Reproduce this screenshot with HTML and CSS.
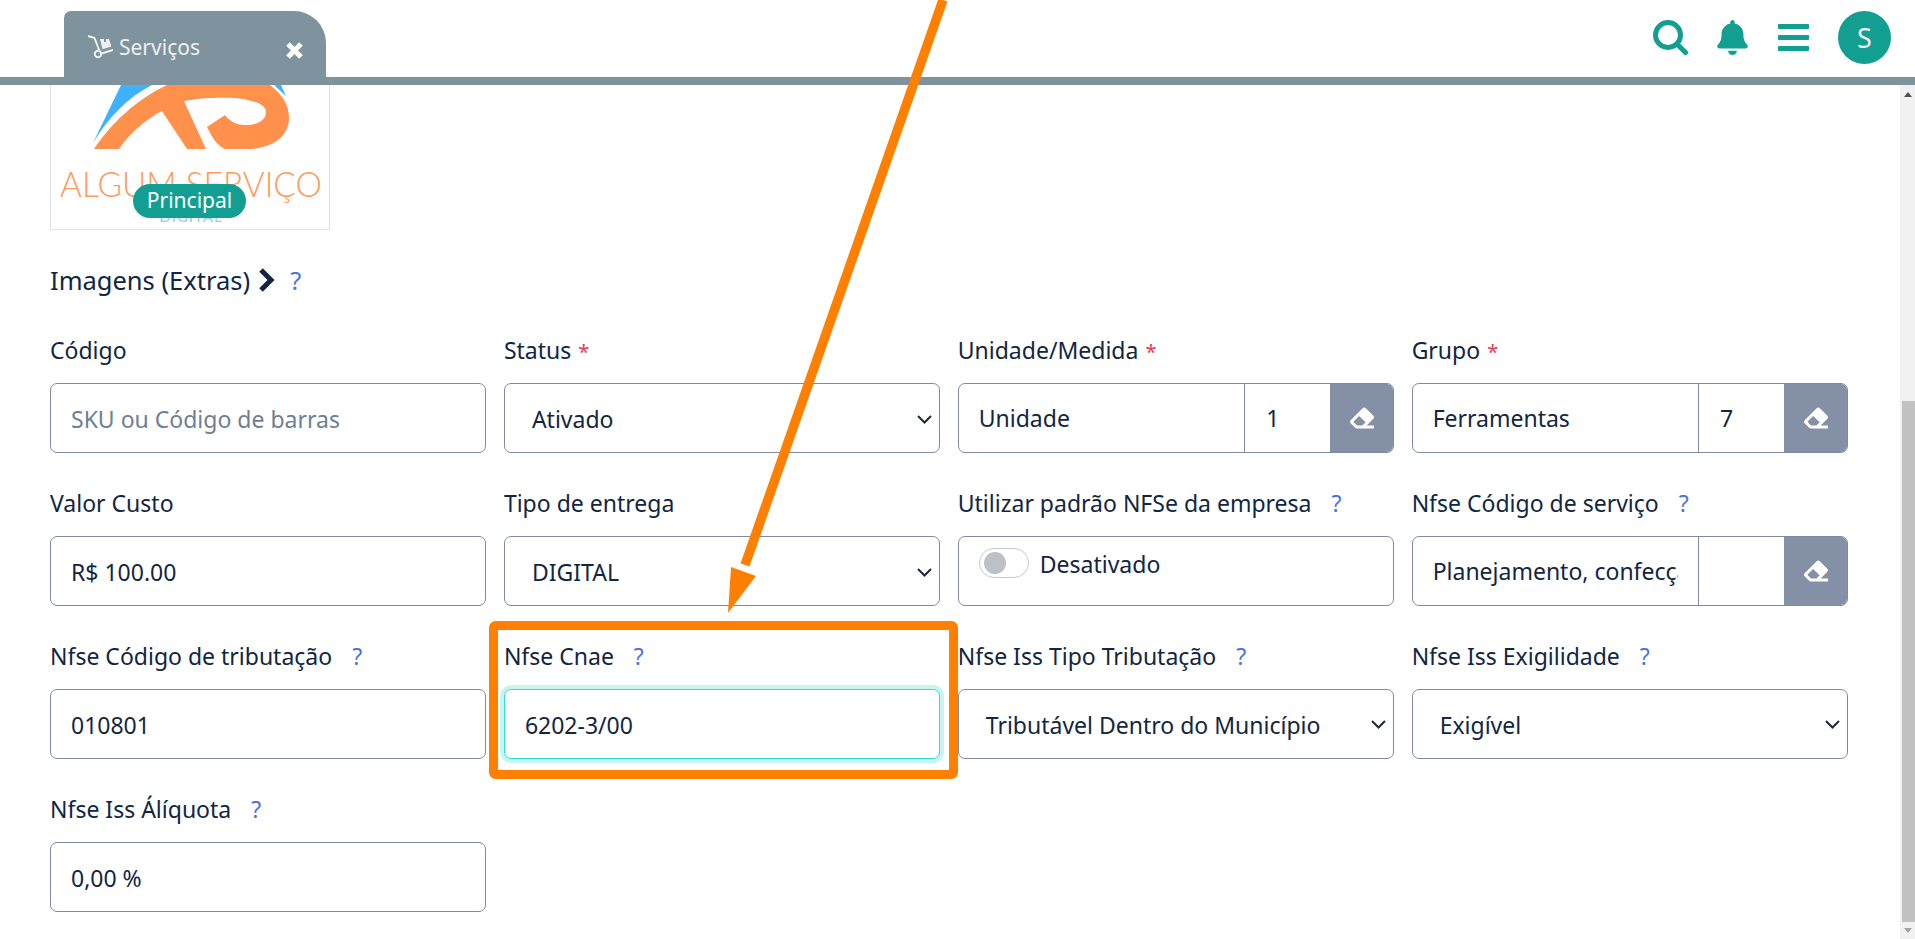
FILE: index.html
```html
<!DOCTYPE html>
<html>
<head>
<title>Serviços</title>
<link rel="stylesheet" href="styles.css">
</head>
<body>
  <header class="topbar">
    <div class="tab">
      <svg class="tab-icon" width="26" height="26" viewBox="0 0 26 26"><path d="M1 3l6.500 2 5 13M13 21l13-4" fill="none" stroke="#eef1f2" stroke-width="2"/><circle cx="11" cy="21" r="3.200" fill="none" stroke="#eef1f2" stroke-width="2"/><path d="M13 6h4v3h2V6h3l2.500 7.500-9 2.800z" fill="#eef1f2"/></svg>
      <span class="tab-title">Serviços</span>
      <svg class="tab-close" width="17" height="17" viewBox="0 0 17 17"><path d="M2 2l13 13M15 2L2 15" stroke="#fff" stroke-width="5"/></svg>
    </div>
    <div class="actions">
      <svg width="35" height="35" viewBox="0 0 35 35"><circle cx="15" cy="15" r="12.500" fill="none" stroke="#129f92" stroke-width="5"/><path d="M24 24l8.500 8.500" stroke="#129f92" stroke-width="5" stroke-linecap="round"/></svg>
      <svg width="31" height="35" viewBox="0 0 448 512"><path fill="#129f92" d="M224 512c35.320 0 63.970-28.650 63.970-64H160.030c0 35.350 28.650 64 63.970 64zm215.390-149.710c-19.320-20.760-55.470-51.990-55.470-154.290 0-77.700-54.480-139.900-127.940-155.160V32c0-17.670-14.320-32-31.980-32s-31.980 14.330-31.980 32v20.840C118.560 68.100 64.080 130.300 64.080 208c0 102.300-36.150 133.530-55.470 154.290-6 6.450-8.660 14.160-8.610 21.710.11 16.400 12.980 32 32.100 32h383.800c19.120 0 32-15.600 32.100-32 .05-7.550-2.610-15.270-8.610-21.710z"/></svg>
      <div class="burger"><span></span><span></span><span></span></div>
      <div class="avatar">S</div>
    </div>
  </header>

  <div class="body-row">
    <main class="content">
      <div class="logo-card">
        <svg class="logo" width="278" height="143" viewBox="51 85 278 143">
          <path fill="#3db3ff" d="M93 143L121 85h31C128 97 108 118 93 143zM274 85h7l5 11z"/>
          <path fill="#ff914d" d="M94 149C110 125 135 100 167 85H270C283 95 289 105 289 118C289 138 270 149 247 149H225C216 145 211 135 207 127L225 115C230 122 238 125 245 125C258 125 266 120 266 112C266 105 255 100 235 98C215 97 198 98 184 101L206 149H187L162 111C145 120 130 133 119 149z"/>
          <text class="logo-name" x="60" y="197" textLength="262" lengthAdjust="spacingAndGlyphs">ALGUM SERVIÇO</text>
          <text class="logo-sub" x="191" y="222" text-anchor="middle">DIGITAL</text>
        </svg>
        <span class="badge">Principal</span>
      </div>

      <div class="extras">
        <span>Imagens (Extras)</span>
        <svg width="17" height="26" viewBox="0 0 17 26"><path d="M3 3l10 10-10 10" fill="none" stroke="#12263f" stroke-width="5"/></svg>
        <span class="help">?</span>
      </div>

      <div class="form-grid">
        <div class="field">
          <div class="label">Código</div>
          <div class="control placeholder">SKU ou Código de barras</div>
        </div>
        <div class="field">
          <div class="label">Status <span class="req">*</span></div>
          <div class="control select"><span>Ativado</span><svg width="15" height="9" viewBox="0 0 15 9"><path d="M1 1l6.500 6.500L14 1" fill="none" stroke="#1e2a3a" stroke-width="2"/></svg></div>
        </div>
        <div class="field">
          <div class="label">Unidade/Medida <span class="req">*</span></div>
          <div class="lookup">
            <div class="lookup-name">Unidade</div>
            <div class="lookup-id">1</div>
            <div class="lookup-btn"><svg width="24" height="24" viewBox="0 0 512 512"><path fill="#fff" d="M497.941 273.941c18.745-18.745 18.745-49.137 0-67.882l-160-160c-18.745-18.745-49.136-18.746-67.883 0l-256 256c-18.745 18.745-18.745 49.137 0 67.882l96 96A48.004 48.004 0 0 0 144 480h356c6.627 0 12-5.373 12-12v-40c0-6.627-5.373-12-12-12H355.883l142.058-142.059zm-302.627-62.627l137.373 137.373L265.373 416H150.628l-80-80 124.686-124.686z"/></svg></div>
          </div>
        </div>
        <div class="field">
          <div class="label">Grupo <span class="req">*</span></div>
          <div class="lookup">
            <div class="lookup-name">Ferramentas</div>
            <div class="lookup-id">7</div>
            <div class="lookup-btn"><svg width="24" height="24" viewBox="0 0 512 512"><path fill="#fff" d="M497.941 273.941c18.745-18.745 18.745-49.137 0-67.882l-160-160c-18.745-18.745-49.136-18.746-67.883 0l-256 256c-18.745 18.745-18.745 49.137 0 67.882l96 96A48.004 48.004 0 0 0 144 480h356c6.627 0 12-5.373 12-12v-40c0-6.627-5.373-12-12-12H355.883l142.058-142.059zm-302.627-62.627l137.373 137.373L265.373 416H150.628l-80-80 124.686-124.686z"/></svg></div>
          </div>
        </div>

        <div class="field">
          <div class="label">Valor Custo</div>
          <div class="control">R$ 100.00</div>
        </div>
        <div class="field">
          <div class="label">Tipo de entrega</div>
          <div class="control select"><span>DIGITAL</span><svg width="15" height="9" viewBox="0 0 15 9"><path d="M1 1l6.500 6.500L14 1" fill="none" stroke="#1e2a3a" stroke-width="2"/></svg></div>
        </div>
        <div class="field">
          <div class="label">Utilizar padrão NFSe da empresa <span class="help">?</span></div>
          <div class="control toggle-box"><span class="toggle"><span class="knob"></span></span><span class="toggle-text">Desativado</span></div>
        </div>
        <div class="field">
          <div class="label">Nfse Código de serviço <span class="help">?</span></div>
          <div class="lookup">
            <div class="lookup-name">Planejamento, confecção, manutenção</div>
            <div class="lookup-id"></div>
            <div class="lookup-btn"><svg width="24" height="24" viewBox="0 0 512 512"><path fill="#fff" d="M497.941 273.941c18.745-18.745 18.745-49.137 0-67.882l-160-160c-18.745-18.745-49.136-18.746-67.883 0l-256 256c-18.745 18.745-18.745 49.137 0 67.882l96 96A48.004 48.004 0 0 0 144 480h356c6.627 0 12-5.373 12-12v-40c0-6.627-5.373-12-12-12H355.883l142.058-142.059zm-302.627-62.627l137.373 137.373L265.373 416H150.628l-80-80 124.686-124.686z"/></svg></div>
          </div>
        </div>

        <div class="field">
          <div class="label">Nfse Código de tributação <span class="help">?</span></div>
          <div class="control">010801</div>
        </div>
        <div class="field">
          <div class="label">Nfse Cnae <span class="help">?</span></div>
          <div class="control focused">6202-3/00</div>
        </div>
        <div class="field">
          <div class="label">Nfse Iss Tipo Tributação <span class="help">?</span></div>
          <div class="control select"><span>Tributável Dentro do Município</span><svg width="15" height="9" viewBox="0 0 15 9"><path d="M1 1l6.500 6.500L14 1" fill="none" stroke="#1e2a3a" stroke-width="2"/></svg></div>
        </div>
        <div class="field">
          <div class="label">Nfse Iss Exigilidade <span class="help">?</span></div>
          <div class="control select"><span>Exigível</span><svg width="15" height="9" viewBox="0 0 15 9"><path d="M1 1l6.500 6.500L14 1" fill="none" stroke="#1e2a3a" stroke-width="2"/></svg></div>
        </div>

        <div class="field">
          <div class="label">Nfse Iss Álíquota <span class="help">?</span></div>
          <div class="control">0,00 %</div>
        </div>
      </div>
    </main>

    <div class="scrollbar">
      <span class="arrow-up"></span>
      <span class="thumb"></span>
      <span class="arrow-down"></span>
    </div>
  </div>

  <!-- annotation drawn on top of the screenshot -->
  <svg class="annotation" width="1915" height="939" viewBox="0 0 1915 939">
    <path d="M943 0L745 565" stroke="#ff8000" stroke-width="9.500" fill="none"/>
    <path d="M728 613L731 567L756 576z" fill="#ff8000"/>
    <rect x="493.500" y="625.500" width="460" height="149" rx="2" fill="none" stroke="#ff8000" stroke-width="9"/>
  </svg>
</body>
</html>
```

FILE: styles.css
```css
html, body {
  margin: 0;
  height: 939px;
  overflow: hidden;
}

body {
  background: #fff;
  color: #12263f;
  font-family: "Noto Sans", "Open Sans", sans-serif;
  font-size: 23px;
}

.topbar {
  display: flex;
  height: 77px;
  padding: 0 24px 0 64px;
  border-bottom: 8px solid #7f939e;
}

.tab {
  display: flex;
  align-items: center;
  align-self: flex-end;
  box-sizing: border-box;
  width: 262px;
  height: 74px;
  margin-bottom: -8px;
  padding: 0 23px;
  background: #7f939e;
  border-radius: 7px 32px 0 0;
  color: #eef1f2;
  position: relative;
}

.tab-icon {
  margin-right: 6px;
  margin-top: -5px;
}

.tab-title {
  font-size: 21px;
  margin-top: -2px;
}

.tab-close {
  margin-left: auto;
  margin-top: 4px;
}

.actions {
  display: flex;
  align-items: center;
  gap: 29.500px;
  height: 53px;
  margin: 11px 0 0 auto;
}

.burger {
  display: flex;
  flex-direction: column;
  gap: 6px;
  width: 31px;
}

.burger span {
  height: 5px;
  background: #129f92;
  border-radius: 1px;
}

.avatar {
  width: 53px;
  height: 53px;
  border-radius: 50%;
  background: #129f92;
  color: #f2f2f2;
  font-size: 27px;
  line-height: 53px;
  text-align: center;
}

.body-row {
  display: flex;
  height: 854px;
}

.content {
  flex: 1;
  min-width: 0;
  padding-left: 50px;
  padding-right: 52px;
  overflow: hidden;
}

.logo-card {
  position: relative;
  width: 278px;
  height: 144px;
  border: 1px solid #dee2e6;
  border-top: 0;
}

.logo {
  display: block;
}

.logo-name {
  fill: #ff9a5c;
  font-family: Lato, sans-serif;
  font-weight: 300;
  font-size: 35px;
}

.logo-sub {
  fill: #8ed0f7;
  font-family: Lato, sans-serif;
  font-size: 15px;
  letter-spacing: 1px;
}

.badge {
  position: absolute;
  left: 82px;
  bottom: 11px;
  width: 113px;
  height: 34px;
  border-radius: 17px;
  background: #129f92;
  color: #fff;
  font-size: 21px;
  line-height: 33px;
  text-align: center;
}

.extras {
  display: flex;
  align-items: center;
  height: 32px;
  margin-top: 34px;
  margin-bottom: 39.250px;
  font-size: 25.500px;
}

.extras svg {
  margin-left: 8px;
}

.extras .help {
  margin-left: 15px;
}

.help {
  color: #4a74d8;
  margin-left: 14px;
}

.req {
  color: #e63757;
  margin-left: 1px;
  font-size: 20px;
}

.form-grid {
  display: grid;
  grid-template-columns: repeat(4, minmax(0, 1fr));
  column-gap: 17.500px;
  row-gap: 34.750px;
}

.label {
  height: 32px;
  line-height: 30px;
  margin-bottom: 16px;
  white-space: nowrap;
}

.control {
  display: flex;
  align-items: center;
  box-sizing: border-box;
  height: 70px;
  padding: 2px 20px 0;
  border: 1px solid #7f8ba3;
  border-radius: 7px;
  background: #fff;
}

.placeholder {
  color: #6e7f95;
}

.select {
  justify-content: space-between;
  padding: 2px 7px 0 27px;
}

.focused {
  border-color: #2ddfd7;
  box-shadow: 0 0 0 4px #c8f5f1;
}

.toggle-box {
  align-items: flex-start;
  padding-top: 11px;
}

.toggle {
  display: block;
  box-sizing: border-box;
  width: 50px;
  height: 30px;
  margin-right: 11px;
  padding: 3px 4px;
  border: 1px solid #c4c8cc;
  border-radius: 15px;
}

.toggle-text {
  line-height: 32px;
}

.knob {
  display: block;
  width: 22px;
  height: 22px;
  border-radius: 50%;
  background: #bdc1c6;
}

.lookup {
  display: flex;
  box-sizing: border-box;
  height: 70px;
  border: 1px solid #7f8ba3;
  border-radius: 7px;
  overflow: hidden;
}

.lookup-name {
  flex: 1;
  min-width: 0;
  margin: 0 20px;
  line-height: 68px;
  white-space: nowrap;
  overflow: hidden;
}

.lookup-id {
  box-sizing: border-box;
  width: 86px;
  padding-left: 21px;
  border-left: 1px solid #7f8ba3;
  line-height: 68px;
}

.lookup-btn {
  display: flex;
  align-items: center;
  justify-content: center;
  width: 63px;
  background: #8490a6;
}

.scrollbar {
  position: relative;
  display: flex;
  flex-direction: column;
  width: 15px;
  background: #f1f1f1;
}

.arrow-up {
  height: 0;
  width: 0;
  margin: 7px auto 0;
  border: 4px solid transparent;
  border-top: 0;
  border-bottom: 5px solid #505050;
}

.thumb {
  width: 13px;
  height: 521px;
  margin: auto 0 0 2px;
  background: #c1c1c1;
}

.arrow-down {
  height: 0;
  width: 0;
  margin: 6px auto 6px;
  border: 4px solid transparent;
  border-bottom: 0;
  border-top: 5px solid #a3a3a3;
}

.annotation {
  position: absolute;
  left: 0;
  top: 0;
  pointer-events: none;
}
```
